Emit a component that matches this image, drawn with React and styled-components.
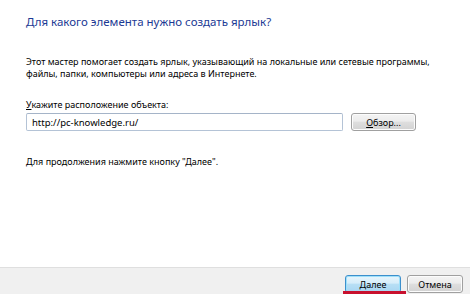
import styled, { createGlobalStyle } from "styled-components"

const GlobalStyle = createGlobalStyle`
html, body {
    margin: 0;
    padding: 0;
    background: #ffffff;
}
body {
    font-family: "Noto Sans", "Open Sans", sans-serif;
    font-size: 9px;
    color: #000000;
}
`

const Window = styled.div`
display: flex;
flex-direction: column;
width: 470px;
height: 294px;
overflow: hidden;
background: #ffffff;
`

const Content = styled.div`
flex: 1;
padding: 14px 20px 0 26px;
`

const Title = styled.h1`
margin: 0;
font-size: 11.5px;
font-weight: 400;
color: #1c3a94;
line-height: 15px;
`

const Text = styled.p`
margin: ${(p) => p.$top || 0}px 0 0 0;
line-height: ${(p) => p.$lh || 11.5}px;
font-size: 9px;
white-space: nowrap;
`

const Label = styled.div`
margin-top: 20px;
font-size: 9px;
line-height: 12px;
`

const Row = styled.div`
display: flex;
align-items: center;
gap: 8px;
margin-top: 2px;
`

const Input = styled.div`
box-sizing: border-box;
width: 317px;
height: 18px;
padding: 0 5px;
display: flex;
align-items: center;
border: 1px solid #b4c3d6;
border-top-color: #a5b4c8;
border-radius: 2px;
font-size: 9.5px;
`

const Button = styled.div`
box-sizing: border-box;
width: ${(p) => p.$w || 56}px;
height: ${(p) => p.$h || 18}px;
display: flex;
align-items: center;
justify-content: center;
border: 1px solid ${(p) => (p.$default ? "#3c8fcc" : "#a0a0a0")};
border-radius: 3px;
font-size: 9px;
background: ${(p) =>
        p.$default
            ? "linear-gradient(#e8f5fc 0%, #d6edfa 45%, #b8dff5 50%, #a8d6f2 100%)"
            : "linear-gradient(#f4f4f4 0%, #ececec 45%, #dedede 50%, #d2d2d2 100%)"};
box-shadow: inset 0 0 0 1px ${(p) => (p.$default ? "#9ee0fa" : "#fcfcfc")};
`

const Footer = styled.div`
box-sizing: border-box;
height: 27px;
border-top: 1px solid #dfdfdf;
background: #f0f0f0;
display: flex;
justify-content: flex-end;
align-items: flex-start;
gap: 6px;
padding: 7px 7px 0 0;
`

const Marked = styled.div`
position: relative;
&::after {
    content: "";
    position: absolute;
    left: -2px;
    right: -5px;
    top: 16px;
    height: 4px;
    background: #c8102e;
}
`

const Key = styled.span`
text-decoration: underline;
`

const App = () => {
    return (
        <Window>
            <GlobalStyle />
            <Content>
                <Title>Для какого элемента нужно создать ярлык?</Title>
                <Text $top={27}>
                    Этот мастер помогает создать ярлык, указывающий на локальные или сетевые программы,
                    <br />
                    файлы, папки, компьютеры или адреса в Интернете.
                </Text>
                <Label><Key>У</Key>кажите расположение объекта:</Label>
                <Row>
                    <Input>http://pc-knowledge.ru/</Input>
                    <Button $w={65}><Key>О</Key>бзор...</Button>
                </Row>
                <Text $top={25} $lh={12}>Для продолжения нажмите кнопку "Далее".</Text>
            </Content>
            <Footer>
                <Marked>
                    <Button $default $w={56}><Key>Д</Key>алее</Button>
                </Marked>
                <Button $w={56}>Отмена</Button>
            </Footer>
        </Window>
    )
}

export default App
